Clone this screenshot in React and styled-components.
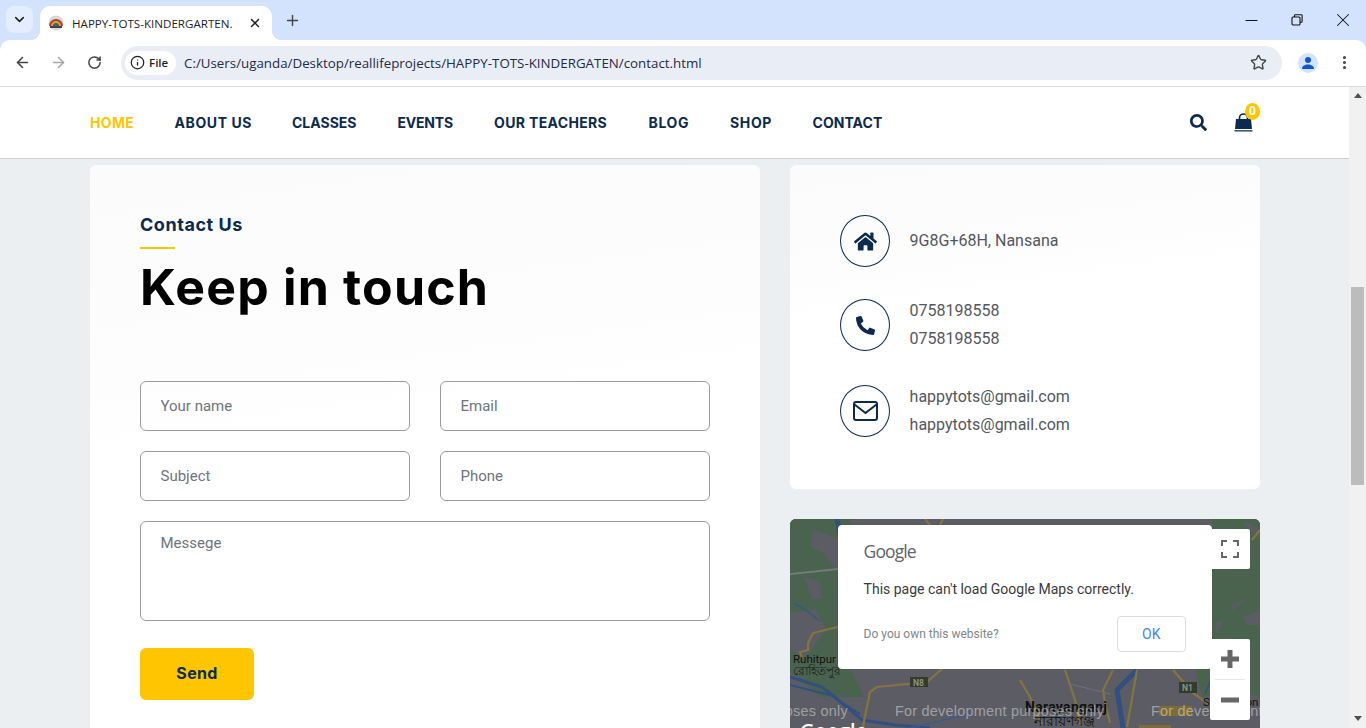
import React from "react";
import styled, { createGlobalStyle } from "styled-components";
import { ArrowLeft, ArrowRight, RotateCw, Info, Star, Plus, X, ChevronDown, EllipsisVertical, Minus } from "lucide-react";
import { FaHome, FaPhoneAlt, FaSearch } from "react-icons/fa";

const navy = "#0b2a4f";
const gold = "#ffc600";
const heading = `"Inter", "Liberation Sans", sans-serif`;
const body = `"Roboto", "Liberation Sans", sans-serif`;
const ui = `"Open Sans", "Noto Sans", sans-serif`;

const Global = createGlobalStyle`
  html, body { margin: 0; padding: 0; height: 728px; overflow: hidden; background: #fff; }
  #root { height: 728px; }
  * { box-sizing: border-box; }
`;

const Shell = styled.div`
  display: flex;
  flex-direction: column;
  width: 1366px;
  height: 728px;
  overflow: hidden;
`;

const TabStrip = styled.div`
  display: flex;
  align-items: flex-end;
  height: 40px;
  flex: none;
  background: #d3e3fd;
  padding-left: 6px;
`;

const TabSearch = styled.div`
  width: 27px;
  height: 27px;
  margin-bottom: 7px;
  margin-right: 7px;
  border-radius: 8px;
  background: #e3edfd;
  display: flex;
  align-items: center;
  justify-content: center;
  color: #1f1f1f;
`;

const Tab = styled.div`
  position: relative;
  width: 232px;
  height: 34px;
  background: #fff;
  border-radius: 10px 10px 0 0;
  display: flex;
  align-items: center;
  padding: 0 10px 0 8px;
  font: 11.6px ${ui};
  color: #1f1f1f;
  &::before, &::after {
    content: "";
    position: absolute;
    bottom: 0;
    width: 10px;
    height: 10px;
  }
  &::before { left: -10px; background: radial-gradient(circle at 0 0, transparent 10px, #fff 10.5px); }
  &::after { right: -10px; background: radial-gradient(circle at 100% 0, transparent 10px, #fff 10.5px); }
`;

const TabTitle = styled.span`
  flex: 1;
  margin-left: 8px;
  white-space: nowrap;
  overflow: hidden;
`;

const NewTab = styled.div`
  margin: 0 0 10px 10px;
  width: 20px;
  height: 20px;
  color: #444;
  display: flex;
  align-items: center;
  justify-content: center;
`;

const WindowControls = styled.div`
  display: flex;
  margin-left: auto;
  align-self: stretch;
`;

const WindowButton = styled.div`
  width: 46px;
  display: flex;
  align-items: center;
  justify-content: center;
  color: #111;
`;

const ToolbarBack = styled.div`
  background: #d3e3fd;
  flex: none;
`;

const Toolbar = styled.div`
  height: 47px;
  background: #fff;
  border-radius: 10px 10px 0 0;
  border-bottom: 1px solid #dadce0;
  display: flex;
  align-items: center;
  padding: 0 4px 1px;
`;

const ToolButton = styled.div`
  width: 36px;
  height: 34px;
  flex: none;
  margin-left: ${(p) => p.$gap || 0}px;
  display: flex;
  align-items: center;
  justify-content: center;
  color: ${(p) => (p.$dim ? "#a5a7aa" : "#444746")};
`;

const Omnibox = styled.div`
  flex: none;
  width: 1161px;
  height: 34px;
  margin: 0 0 0 9px;
  border-radius: 17px;
  background: #e9eef6;
  display: flex;
  align-items: center;
  padding: 0 6px 0 4px;
`;

const FileChip = styled.div`
  width: 51px;
  height: 24px;
  border-radius: 12px;
  background: #fff;
  display: flex;
  align-items: center;
  gap: 4px;
  padding-left: 5px;
  font: 600 11.5px ${ui};
  color: #1f1f1f;
`;

const Url = styled.span`
  flex: 1;
  margin-left: 8px;
  font: 13.33px ${ui};
  color: #1f2a44;
  white-space: nowrap;
`;

const Avatar = styled.div`
  width: 20px;
  height: 20px;
  border-radius: 50%;
  background: #d3e3fd;
  display: flex;
  align-items: center;
  justify-content: center;
`;

const Viewport = styled.div`
  flex: 1;
  min-height: 0;
  display: flex;
`;

const Page = styled.div`
  width: 1349px;
  height: 641px;
  overflow: hidden;
  background: #ebeff2;
`;

const Header = styled.header`
  height: 72px;
  background: #fff;
  border-bottom: 1px solid #cfd1d3;
  display: flex;
  align-items: center;
  justify-content: space-between;
  padding: 0 89px 0 90px;
`;

const Nav = styled.nav`
  display: flex;
  gap: 40.5px;
`;

const NavLink = styled.a`
  width: ${(p) => p.$w}px;
  font: 700 14px ${heading};
  letter-spacing: ${(p) => p.$ls}px;
  color: ${(p) => (p.$active ? gold : navy)};
  white-space: nowrap;
`;

const HeaderIcons = styled.div`
  display: flex;
  align-items: center;
  gap: 27px;
  color: ${navy};
  padding-right: 7px;
`;

const Cart = styled.div`
  position: relative;
  display: flex;
  color: ${navy};
`;

const Badge = styled.span`
  position: absolute;
  left: 11px;
  top: -10px;
  width: 15px;
  height: 17px;
  border-radius: 50%;
  background: ${gold};
  color: #fff;
  font: 700 12px/17px ${body};
  text-align: center;
`;

const Columns = styled.div`
  display: grid;
  grid-template-columns: 670px 470px;
  gap: 30px;
  padding: 6px 0 0 90px;
`;

const Card = styled.section`
  background: linear-gradient(172deg, #fbfbfc 0%, #fcfcfd 22%, #fff 42%);
  border-radius: 6px;
`;

const FormCard = styled(Card)`
  padding: 50px;
  height: 640px;
`;

const Eyebrow = styled.div`
  font: 700 18px/20px ${heading};
  letter-spacing: 0.55px;
  color: ${navy};
`;

const Rule = styled.div`
  width: 35px;
  height: 2px;
  background: ${gold};
  margin-top: 12px;
`;

const Title = styled.h1`
  margin: 8px 0 64px;
  font: 700 50px/60px ${heading};
  letter-spacing: 1.2px;
  color: #000;
`;

const Form = styled.div`
  display: grid;
  grid-template-columns: 270px 270px;
  column-gap: 30px;
  row-gap: 20px;
`;

const Field = styled.input`
  height: 50px;
  padding: 0 19.5px;
  border: 1px solid #9b9b9b;
  border-radius: 6px;
  background: transparent;
  font: 15px ${body};
  color: #333;
  &::placeholder { color: #6c757d; opacity: 1; }
`;

const Area = styled.textarea`
  grid-column: 1 / -1;
  height: 100px;
  padding: 12px 19.5px;
  border: 1px solid #9b9b9b;
  border-radius: 6px;
  background: transparent;
  resize: none;
  font: 15px/18px ${body};
  &::placeholder { color: #6c757d; opacity: 1; }
`;

const Send = styled.button`
  display: block;
  margin-top: 27px;
  padding: 0 0 3px;
  width: 114px;
  height: 52px;
  border: 0;
  border-radius: 6px;
  background: ${gold};
  color: ${navy};
  font: 700 16px ${heading};
  letter-spacing: 0.3px;
`;

const Side = styled.div`
  display: flex;
  flex-direction: column;
  gap: 30px;
`;

const InfoCard = styled(Card)`
  padding: 50px;
  display: flex;
  flex-direction: column;
  gap: 30px;
`;

const InfoRow = styled.div`
  display: flex;
  align-items: center;
  gap: 19.6px;
`;

const Circle = styled.div`
  flex: none;
  width: 50px;
  height: 52px;
  border: 1px solid ${navy};
  border-radius: 50%;
  display: flex;
  align-items: center;
  justify-content: center;
  color: ${navy};
`;

const InfoText = styled.div`
  font: 16px/28px ${body};
  color: #53575d;
`;

const MapFrame = styled.div`
  position: relative;
  height: 240px;
  border-radius: 6px;
  overflow: hidden;
  background: #5c5d64;
`;

const MapArt = styled.svg`
  display: block;
  width: 470px;
  height: 240px;
`;

const Dialog = styled.div`
  position: absolute;
  left: 48px;
  top: 6px;
  width: 374px;
  height: 144px;
  background: #fff;
  border-radius: 4px;
  padding: 15px 26.5px 0 25.6px;
  display: flex;
  flex-direction: column;
  font-family: ${body};
  box-shadow: 0 0 1px rgba(0, 0, 0, 0.3);
`;

const GoogleMark = styled.div`
  font: 17.5px/22px "Open Sans", sans-serif;
  letter-spacing: -0.9px;
  color: #5f6368;
`;

const DialogText = styled.div`
  margin-top: 17px;
  font: 14px/20px ${body};
  color: #3a3a3a;
`;

const DialogFoot = styled.div`
  margin-top: 17px;
  display: flex;
  align-items: center;
  justify-content: space-between;
  font-size: 12px;
  color: #80868b;
`;

const OkButton = styled.div`
  width: 68.5px;
  height: 36px;
  border: 1px solid #dadce0;
  border-radius: 4px;
  display: flex;
  align-items: center;
  justify-content: center;
  font-size: 14px;
  color: #4285f4;
`;

const MapControl = styled.div`
  position: absolute;
  right: 10px;
  top: ${(p) => p.$top}px;
  width: 40px;
  background: #fff;
  border-radius: 2px;
  display: flex;
  flex-direction: column;
  align-items: center;
`;

const ControlCell = styled.div`
  width: 40px;
  height: 40px;
  display: flex;
  align-items: center;
  justify-content: center;
`;

const ControlRule = styled.div`
  width: 30px;
  height: 1px;
  background: #e6e6e6;
`;

const Scrollbar = styled.div`
  width: 17px;
  height: 641px;
  background: #f1f1f1;
  display: flex;
  flex-direction: column;
  align-items: center;
  padding: 6px 0 7px;
`;

const ArrowUp = styled.div`
  width: 0;
  height: 0;
  border-left: 4px solid transparent;
  border-right: 4px solid transparent;
  border-bottom: 5px solid #505050;
`;

const ArrowDown = styled(ArrowUp)`
  margin-top: auto;
  border-bottom: 0;
  border-top: 5px solid #505050;
`;

const Thumb = styled.div`
  width: 13px;
  height: 198px;
  margin-top: 189px;
  background: #bcbcbc;
`;

const rd = { fill: "none", stroke: "#84743f", strokeWidth: 2.2, strokeLinejoin: "round" };
const rv = { fill: "none", stroke: "#31507f", strokeWidth: 3, strokeLinejoin: "round" };
const wm = { fill: "rgba(255,255,255,.42)", fontFamily: "Liberation Sans, sans-serif", fontSize: 14.5, letterSpacing: 0.2 };
const lbl = { fill: "#111", fontFamily: "Roboto, sans-serif", fontSize: 11.5 };

const MapDrawing = () => (
  <MapArt viewBox="0 0 470 240">
    <rect width="470" height="240" fill="#5c5d64" />
    <polygon points="0,0 60,0 60,150 75,178 30,178 0,152" fill="#4a634f" />
    <polygon points="23,11 50,20 50,55 33,34 20,28" fill="#5c5d64" />
    <polygon points="14,58 30,62 32,80 22,80" fill="#5c5d64" />
    <polygon points="0,94 25,90 36,110 15,140 0,130" fill="#5c5d64" />
    <polygon points="422,0 470,0 470,178 440,170 412,178 405,150 422,140" fill="#4a634f" />
    <polygon points="453,1 470,11 470,20 458,8" fill="#5c5d64" />
    <polygon points="440,88 457,78 443,91" fill="#5c5d64" />
    <polygon points="453,98 470,91 470,106 457,106" fill="#5c5d64" />
    <polygon points="425,104 433,101 427,116" fill="#5c5d64" />
    <polyline points="0,55 20,53 48,50" fill="none" stroke="#77787c" strokeWidth="2" />
    <polyline points="4,84 14,90 30,102" fill="none" stroke="#2f5a82" strokeWidth="1.5" />
    <polyline points="47,0 52,25" stroke="#31507f" strokeWidth="5" fill="none" />
    <polyline points="0,158 32,168 52,184 72,201 105,206 140,209" {...rv} />
    <polyline points="0,166 40,176 70,195" {...rv} strokeWidth="2" />
    <polyline points="347,151 327,171 333,209" {...rv} strokeWidth="5" />
    <polyline points="428,130 425,150 415,175" {...rv} strokeWidth="1.5" />
    <polyline points="48,108 23,114 18,124 18,131 10,133 12,139" {...rd} />
    <polyline points="153,149 137,163 87,168 80,173 72,212" {...rd} />
    <polyline points="230,161 240,178 252,205" {...rd} />
    <polyline points="275,151 285,181 290,205" {...rd} />
    <polyline points="323,151 313,171 315,184 320,204" {...rd} />
    <polyline points="347,151 337,208" {...rd} />
    <polyline points="383,151 403,174 437,198" {...rd} />
    <polyline points="462,21 470,11" {...rd} />
    <polyline points="135,0 140,6" {...rd} />
    <polyline points="153,0 150,6" {...rd} />
    <polyline points="120,209 180,195" stroke="#3d5a90" strokeWidth="1.5" fill="none" />
    <polyline points="280,165 320,175" stroke="#6f7074" strokeWidth="1.2" fill="none" />
    <rect x="120" y="158" width="18" height="10" fill="#343b2c" />
    <text x="123" y="166.5" fill="#8b927f" fontFamily="Roboto, sans-serif" fontWeight="700" fontSize="8.5">N8</text>
    <rect x="389" y="163" width="18" height="11" fill="#343b2c" />
    <text x="392" y="172" fill="#8b927f" fontFamily="Roboto, sans-serif" fontWeight="700" fontSize="8.5">N1</text>
    <rect x="369" y="187" width="33" height="10" fill="#7d6c35" />
    <rect x="349" y="206" width="32" height="10" fill="#7d6c35" />
    <text {...lbl} x="3" y="144">Ruhitpur</text>
    <text {...lbl} x="3" y="156" fontFamily="Noto Sans CJK SC, sans-serif" opacity=".8">রোহিতপুর</text>
    <text {...lbl} x="235" y="193" fontSize="14" fontWeight="700" letterSpacing=".3">Narayanganj</text>
    <text {...lbl} x="244" y="207" fontSize="14">নারায়ণগঞ্জ</text>
    <text {...lbl} x="413" y="187">Sonargaon</text>
    <text {...wm} x="-151" y="197">For development purposes only</text>
    <text {...wm} x="105" y="197">For development purposes only</text>
    <text {...wm} x="361" y="197">For development purposes only</text>
    <text x="10" y="219" fill="#fff" fontFamily="Open Sans, sans-serif" fontWeight="600" fontSize="20">Google</text>
  </MapArt>
);

const Favicon = () => (
  <svg width="16" height="16" viewBox="0 0 16 16">
    <circle cx="8" cy="8" r="7.5" fill="#d8d8d0" />
    <path d="M1 11a7 7 0 0 1 14 0z" fill="#b23a33" />
    <path d="M3 11a5 5 0 0 1 10 0z" fill="#d9a531" />
    <path d="M5 11a3 3 0 0 1 6 0z" fill="#3b6d46" />
    <rect x="2" y="11" width="12" height="2" fill="#4a3a66" />
  </svg>
);

const Bag = () => (
  <svg width="19" height="19" viewBox="0 0 19 19">
    <path d="M5.5 6.5V5a4 4 0 0 1 8 0v1.5" fill="none" stroke="currentColor" strokeWidth="1.6" />
    <path d="M2 6h15l1 10H1z" fill="currentColor" />
    <rect x="0.5" y="17" width="18" height="1.6" fill="#3d5a7e" />
  </svg>
);

const Envelope = () => (
  <svg width="25" height="20" viewBox="0 0 25 20" fill="none" stroke="currentColor" strokeWidth="2">
    <rect x="1" y="1" width="23" height="18" rx="2" />
    <path d="M1.5 3.5 12.5 12l11-8.5" />
  </svg>
);

const items = [
  ["HOME", 44, 0.35],
  ["ABOUT US", 77, 0.6],
  ["CLASSES", 65, 0],
  ["EVENTS", 56, -0.2],
  ["OUR TEACHERS", 114, 0.35],
  ["BLOG", 41, 0.65],
  ["SHOP", 42, 0.65],
  ["CONTACT", 70, 0.05],
];

export default function App() {
  return (
    <Shell>
      <Global />
      <TabStrip>
        <TabSearch><ChevronDown size={15} strokeWidth={2.5} /></TabSearch>
        <Tab>
          <Favicon />
          <TabTitle>HAPPY-TOTS-KINDERGARTEN.</TabTitle>
          <X size={14} strokeWidth={2.5} />
        </Tab>
        <NewTab><Plus size={17} strokeWidth={2} /></NewTab>
        <WindowControls>
          <WindowButton><Minus size={19} strokeWidth={1.3} /></WindowButton>
          <WindowButton>
            <svg width="12" height="12" viewBox="0 0 12 12" fill="none" stroke="#111" strokeWidth="1.1">
              <rect x="1" y="3" width="8" height="8" rx="1" />
              <path d="M3.5 3V1.5a.8.8 0 0 1 .8-.8h6a.8.8 0 0 1 .8.8v6a.8.8 0 0 1-.8.8H9" />
            </svg>
          </WindowButton>
          <WindowButton><X size={22} strokeWidth={1.1} /></WindowButton>
        </WindowControls>
      </TabStrip>
      <ToolbarBack>
        <Toolbar>
          <ToolButton><ArrowLeft size={17} strokeWidth={2.3} /></ToolButton>
          <ToolButton $dim><ArrowRight size={17} strokeWidth={2.3} /></ToolButton>
          <ToolButton><RotateCw size={15} strokeWidth={2.4} /></ToolButton>
          <Omnibox>
            <FileChip><Info size={15} strokeWidth={2} />File</FileChip>
            <Url>C:/Users/uganda/Desktop/reallifeprojects/HAPPY-TOTS-KINDERGATEN/contact.html</Url>
            <ToolButton><Star size={17} strokeWidth={2} /></ToolButton>
          </Omnibox>
          <ToolButton $gap={8}>
            <Avatar>
              <svg width="14" height="14" viewBox="0 0 14 14" fill="#0b57d0">
                <circle cx="7" cy="4" r="3" />
                <path d="M1 13c0-3 2.6-4.6 6-4.6s6 1.6 6 4.6z" />
              </svg>
            </Avatar>
          </ToolButton>
          <ToolButton><EllipsisVertical size={17} strokeWidth={2.4} /></ToolButton>
        </Toolbar>
      </ToolbarBack>
      <Viewport>
        <Page>
          <Header>
            <Nav>
              {items.map(([t, w, ls], i) => (
                <NavLink key={t} $w={w} $ls={ls} $active={i === 0}>{t}</NavLink>
              ))}
            </Nav>
            <HeaderIcons>
              <FaSearch size={17} />
              <Cart>
                <Bag />
                <Badge>0</Badge>
              </Cart>
            </HeaderIcons>
          </Header>
          <Columns>
            <FormCard>
              <Eyebrow>Contact Us</Eyebrow>
              <Rule />
              <Title>Keep in touch</Title>
              <Form>
                <Field placeholder="Your name" />
                <Field placeholder="Email" />
                <Field placeholder="Subject" />
                <Field placeholder="Phone" />
                <Area placeholder="Messege" />
              </Form>
              <Send>Send</Send>
            </FormCard>
            <Side>
              <InfoCard>
                <InfoRow>
                  <Circle><FaHome size={23} /></Circle>
                  <InfoText>9G8G+68H, Nansana</InfoText>
                </InfoRow>
                <InfoRow>
                  <Circle><FaPhoneAlt size={19} /></Circle>
                  <InfoText>0758198558<br />0758198558</InfoText>
                </InfoRow>
                <InfoRow>
                  <Circle><Envelope /></Circle>
                  <InfoText>happytots@gmail.com<br />happytots@gmail.com</InfoText>
                </InfoRow>
              </InfoCard>
              <MapFrame>
                <MapDrawing />
                <Dialog>
                  <GoogleMark>Google</GoogleMark>
                  <DialogText>This page can't load Google Maps correctly.</DialogText>
                  <DialogFoot>
                    <span>Do you own this website?</span>
                    <OkButton>OK</OkButton>
                  </DialogFoot>
                </Dialog>
                <MapControl $top={10}>
                  <ControlCell>
                    <svg width="18" height="18" viewBox="0 0 18 18" fill="none" stroke="#666" strokeWidth="2">
                      <path d="M1 6V1h5M12 1h5v5M17 12v5h-5M6 17H1v-5" />
                    </svg>
                  </ControlCell>
                </MapControl>
                <MapControl $top={120}>
                  <ControlCell>
                    <svg width="18" height="18" viewBox="0 0 18 18" fill="none" stroke="#666" strokeWidth="5">
                      <path d="M9 0v18M0 9h18" />
                    </svg>
                  </ControlCell>
                  <ControlRule />
                  <ControlCell>
                    <svg width="18" height="18" viewBox="0 0 18 18" fill="none" stroke="#666" strokeWidth="5">
                      <path d="M0 9h18" />
                    </svg>
                  </ControlCell>
                </MapControl>
              </MapFrame>
            </Side>
          </Columns>
        </Page>
        <Scrollbar>
          <ArrowUp />
          <Thumb />
          <ArrowDown />
        </Scrollbar>
      </Viewport>
    </Shell>
  );
}
